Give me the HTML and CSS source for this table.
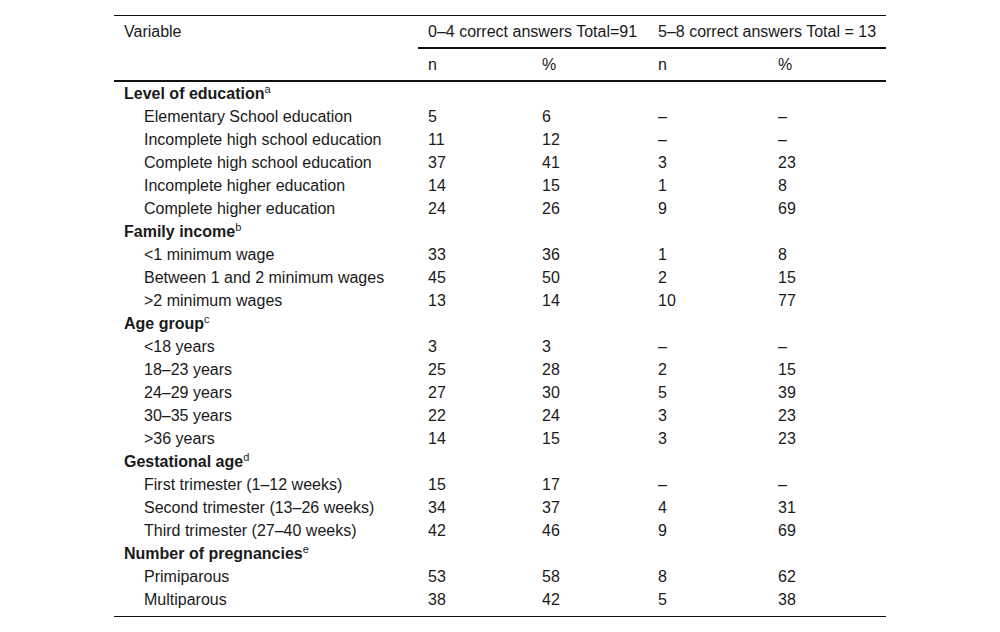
FILE: index.html
```html
<!DOCTYPE html>
<html>
<head>
<meta charset="utf-8">
<link rel="stylesheet" href="styles.css">
</head>
<body>
<div class="wrap">
<table class="tbl">
  <colgroup>
    <col class="c1"><col class="c2"><col class="c3"><col class="c4"><col class="c5">
  </colgroup>
  <thead>
    <tr class="h1">
      <th class="var">Variable</th>
      <th class="grp" colspan="2">0–4 correct answers Total=91</th>
      <th class="grp" colspan="2">5–8 correct answers Total = 13</th>
    </tr>
    <tr class="h2">
      <th></th><th>n</th><th>%</th><th>n</th><th>%</th>
    </tr>
  </thead>
  <tbody>
    <tr class="cat"><td>Level of education<sup>a</sup></td><td></td><td></td><td></td><td></td></tr>
    <tr><td class="sub">Elementary School education</td><td>5</td><td>6</td><td>–</td><td>–</td></tr>
    <tr><td class="sub">Incomplete high school education</td><td>11</td><td>12</td><td>–</td><td>–</td></tr>
    <tr><td class="sub">Complete high school education</td><td>37</td><td>41</td><td>3</td><td>23</td></tr>
    <tr><td class="sub">Incomplete higher education</td><td>14</td><td>15</td><td>1</td><td>8</td></tr>
    <tr><td class="sub">Complete higher education</td><td>24</td><td>26</td><td>9</td><td>69</td></tr>
    <tr class="cat"><td>Family income<sup>b</sup></td><td></td><td></td><td></td><td></td></tr>
    <tr><td class="sub">&lt;1 minimum wage</td><td>33</td><td>36</td><td>1</td><td>8</td></tr>
    <tr><td class="sub">Between 1 and 2 minimum wages</td><td>45</td><td>50</td><td>2</td><td>15</td></tr>
    <tr><td class="sub">&gt;2 minimum wages</td><td>13</td><td>14</td><td>10</td><td>77</td></tr>
    <tr class="cat"><td>Age group<sup>c</sup></td><td></td><td></td><td></td><td></td></tr>
    <tr><td class="sub">&lt;18 years</td><td>3</td><td>3</td><td>–</td><td>–</td></tr>
    <tr><td class="sub">18–23 years</td><td>25</td><td>28</td><td>2</td><td>15</td></tr>
    <tr><td class="sub">24–29 years</td><td>27</td><td>30</td><td>5</td><td>39</td></tr>
    <tr><td class="sub">30–35 years</td><td>22</td><td>24</td><td>3</td><td>23</td></tr>
    <tr><td class="sub">&gt;36 years</td><td>14</td><td>15</td><td>3</td><td>23</td></tr>
    <tr class="cat"><td>Gestational age<sup>d</sup></td><td></td><td></td><td></td><td></td></tr>
    <tr><td class="sub">First trimester (1–12 weeks)</td><td>15</td><td>17</td><td>–</td><td>–</td></tr>
    <tr><td class="sub">Second trimester (13–26 weeks)</td><td>34</td><td>37</td><td>4</td><td>31</td></tr>
    <tr><td class="sub">Third trimester (27–40 weeks)</td><td>42</td><td>46</td><td>9</td><td>69</td></tr>
    <tr class="cat"><td>Number of pregnancies<sup>e</sup></td><td></td><td></td><td></td><td></td></tr>
    <tr><td class="sub">Primiparous</td><td>53</td><td>58</td><td>8</td><td>62</td></tr>
    <tr class="last"><td class="sub">Multiparous</td><td>38</td><td>42</td><td>5</td><td>38</td></tr>
  </tbody>
</table>
</div>
</body>
</html>
```

FILE: styles.css
```css
html, body {
  margin: 0;
  padding: 0;
  background: #fff;
}
.wrap {
  padding: 15px 0 0 114px;
}
.tbl {
  width: 772px;
  border-collapse: separate;
  border-spacing: 0;
  table-layout: fixed;
  font-family: "Liberation Sans", Arial, sans-serif;
  font-size: 16px;
  color: #1a1a1a;
}
.c1 { width: 304px; }
.c2 { width: 114px; }
.c3 { width: 116px; }
.c4 { width: 120px; }
.c5 { width: 118px; }
.tbl th, .tbl td {
  padding: 0 0 0 10px;
  text-align: left;
  font-weight: normal;
  white-space: nowrap;
}
.h1 th {
  border-top: 1px solid #111;
  height: 31px;
  line-height: 31px;
  vertical-align: top;
}
.h1 th.grp {
  border-bottom: 2px solid #111;
}
.h2 th {
  height: 31px;
  line-height: 31px;
  border-bottom: 2px solid #111;
  vertical-align: middle;
}
.tbl td {
  height: 23px;
  line-height: 23px;
  vertical-align: top;
}
.tbl td.sub {
  padding-left: 30px;
}
.cat td {
  font-weight: bold;
}
.cat sup {
  font-weight: normal;
  font-size: 11px;
  line-height: 0;
  vertical-align: 6px;
}
.last td {
  height: 28px;
  border-bottom: 1px solid #111;
}
```
